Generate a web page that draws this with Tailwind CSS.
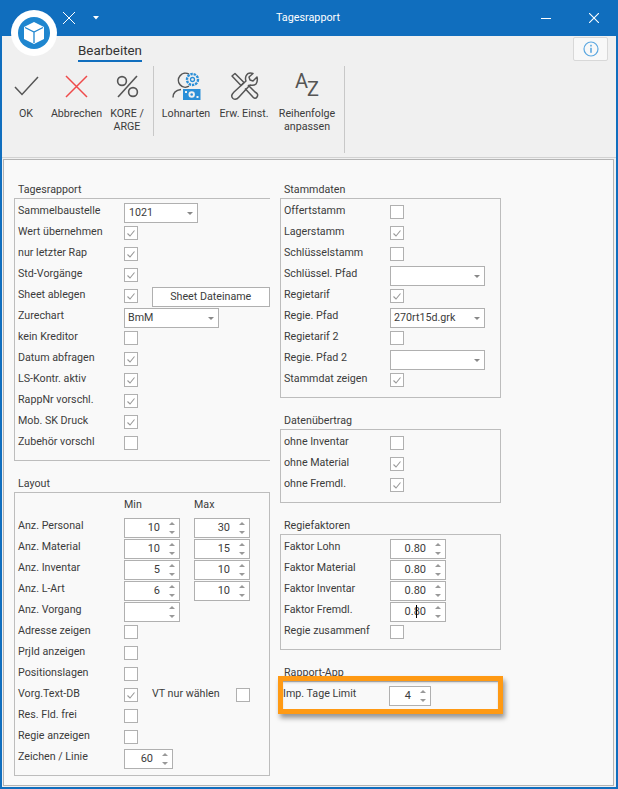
<!DOCTYPE html>
<html lang="de">
<head>
  <meta charset="UTF-8" />
  <title>Tagesrapport</title>
  <script src="https://cdn.jsdelivr.net/npm/@tailwindcss/browser@4"></script>
</head>
<body class="bg-white">
  <div class="relative w-[618px] h-[789px] overflow-hidden flex flex-col bg-[#f0f0f0] border-x-2 border-b-2 border-[#106ebe] font-['Roboto',sans-serif] text-[10.7px] text-[#3c3c3c]">

    <!-- title bar -->
    <div class="relative h-[36px] shrink-0 bg-[#106ebe] -mx-[2px] flex items-center justify-center text-white text-[10.8px]">
      <span class="-ml-[2px]">Tagesrapport</span>
      <svg class="absolute left-[63px] top-[12px]" width="12" height="12" viewBox="0 0 12 12"><path d="M0 0L12 12M12 0L0 12" stroke="#fff" stroke-width="1" fill="none"/></svg>
      <svg class="absolute left-[93px] top-[16px]" width="6" height="4" viewBox="0 0 6 4"><path d="M0 0H6L3 3.5Z" fill="#fff"/></svg>
      <div class="absolute left-[541px] top-[18px] w-[10px] h-px bg-white"></div>
      <svg class="absolute left-[589px] top-[13px]" width="10" height="10" viewBox="0 0 10 10"><path d="M0 0L10 10M10 0L0 10" stroke="#fff" stroke-width="1.1" fill="none"/></svg>
    </div>

    <!-- tab row -->
    <div class="relative h-[30px] shrink-0">
      <div class="absolute left-[76px] top-[5px] text-[13.4px] leading-[19px] text-[#333] border-b-2 border-[#106ebe] h-[21px]">Bearbeiten</div>
      <div class="absolute right-[8px] top-[1px] w-[35px] h-[24px] bg-[#f8f8f8] border border-[#d8d8d8] rounded-[2px] flex items-center justify-center">
        <svg width="16" height="16" viewBox="0 0 16 16"><circle cx="8" cy="8" r="7" fill="none" stroke="#5ba7e0" stroke-width="1.2"/><rect x="7.2" y="6.8" width="1.6" height="5" fill="#5ba7e0"/><rect x="7.2" y="3.8" width="1.6" height="1.7" fill="#5ba7e0"/></svg>
      </div>
    </div>

    <!-- ribbon -->
    <div class="h-[91px] shrink-0 flex pl-[5px]">
      <div class="w-[38px] flex flex-col items-center">
        <div class="h-[40px] flex items-center justify-center">
          <svg width="25" height="20" viewBox="0 0 25 20"><path d="M1 11L8 18.5L24 1" fill="none" stroke="#555" stroke-width="1.5"/></svg>
        </div>
        <div class="mt-[1px] leading-[13px] text-center">OK</div>
      </div>
      <div class="w-[63px] flex flex-col items-center">
        <div class="h-[40px] flex items-center justify-center">
          <svg width="23" height="23" viewBox="0 0 23 23"><path d="M1 1L22 22M22 1L1 22" fill="none" stroke="#ef4a4a" stroke-width="1.5"/></svg>
        </div>
        <div class="mt-[1px] leading-[13px] text-center">Abbrechen</div>
      </div>
      <div class="w-[38px] flex flex-col items-center">
        <div class="h-[40px] flex items-center justify-center">
          <svg width="23" height="23" viewBox="0 0 23 23"><g fill="none" stroke="#555" stroke-width="1.6"><circle cx="6" cy="6" r="4.4"/><circle cx="17" cy="17" r="4.4"/><path d="M21 1L2 22"/></g></svg>
        </div>
        <div class="mt-[1px] leading-[13px] text-center">KORE /<br>ARGE</div>
      </div>
      <div class="w-px h-[70px] ml-[7px] bg-[#c8c8c8]"></div>
      <div class="w-[58px] ml-[3px] flex flex-col items-center">
        <div class="h-[40px] flex items-center justify-center">
          <svg width="29" height="29" viewBox="0 0 29 29">
            <path d="M17 2.200A7 7 0 1 0 17 14.200" fill="none" stroke="#555" stroke-width="1.500"/>
            <path d="M1 25.500Q1 18.500 9 17.500" fill="none" stroke="#555" stroke-width="1.500"/>
            <circle cx="20.500" cy="7.500" r="5.500" fill="#f0f0f0" stroke="#2b8fd8" stroke-width="2.400" stroke-dasharray="2.400 0.900"/>
            <circle cx="20.500" cy="7.500" r="2" fill="none" stroke="#2b8fd8" stroke-width="1.300"/>
            <rect x="11" y="17" width="17.500" height="11" fill="#2b8fd8"/>
            <circle cx="19.700" cy="22.500" r="3.200" fill="#f0f0f0"/>
            <circle cx="19.700" cy="22.500" r="1.300" fill="#2b8fd8"/>
            <rect x="13" y="19" width="2" height="2" fill="#f0f0f0"/><rect x="24.500" y="24" width="2" height="2" fill="#f0f0f0"/>
          </svg>
        </div>
        <div class="mt-[1px] leading-[13px] text-center">Lohnarten</div>
      </div>
      <div class="w-[58px] flex flex-col items-center">
        <div class="h-[40px] flex items-center justify-center">
          <svg width="29" height="29" viewBox="0 0 29 29">
            <g fill="none" stroke="#555" stroke-width="1.5" stroke-linejoin="round">
              <path d="M2 4L5 1.500L14 10.500L11 13.500Z"/>
              <path d="M15 16.500L22 24Q25 28 27 25Q29 22 25 20L18 13"/>
              <path d="M27 5L23 9L20 8L19 5L23 1.500Q18 0 16 4Q15 7 16 9L4 20Q0 24 3 26.500Q6 28.500 9 25L20 13Q24 14 26 12Q28 9 27 5Z"/>
            </g>
          </svg>
        </div>
        <div class="mt-[1px] leading-[13px] text-center">Erw. Einst.</div>
      </div>
      <div class="w-[68px] flex flex-col items-center">
        <div class="h-[40px] flex items-start justify-center text-[#555] text-[20px] leading-[20px]">
          <span class="mt-[5px]">A</span><span class="mt-[13px] -ml-[1px]">Z</span>
        </div>
        <div class="mt-[1px] leading-[13px] text-center">Reihenfolge<br>anpassen</div>
      </div>
      <div class="w-px h-[87px] ml-[3px] bg-[#c8c8c8]"></div>
    </div>

    <!-- main panel -->
    <div class="flex-1 flex flex-col border-t border-[#d2d2d2] pt-[1px]">
    <div class="ml-[1px] mr-[2px] mb-[1px] flex-1 flex gap-[10px] bg-[#f9f9f9] border border-[#b4b4b4] pt-[22px] pl-[10px]">

      <!-- left column -->
      <div class="w-[256px] flex flex-col gap-[15px]">
        <div>
          <div class="h-[16px] leading-[16px] pl-[4px]">Tagesrapport</div>
          <div class="h-[263px] border-t border-l border-b border-[#bdbdbd] pl-[3px] pt-[1px]">
            <div class="flex h-[21px]"><span class="w-[106px] leading-[21px]">Sammelbaustelle</span>
              <div class="relative mt-[3px] w-[74px] h-[20px] bg-white border border-[#b0b0b0] pl-[4px] leading-[18px]">1021<span class="absolute right-[4px] top-[8px] w-0 h-0 border-x-[3px] border-t-[3px] border-x-transparent border-t-[#888]"></span></div>
            </div>
            <div class="flex h-[21px]"><span class="w-[106px] leading-[21px]">Wert übernehmen</span><div class="mt-[5px] w-[14px] h-[14px] bg-white border border-[#b0b0b0] flex items-center justify-center"><svg width="8" height="7" viewBox="0 0 8 7"><path d="M0.500 3.500L3 6L7.500 0.500" fill="none" stroke="#999" stroke-width="1.100"/></svg></div></div>
            <div class="flex h-[21px]"><span class="w-[106px] leading-[21px]">nur letzter Rap</span><div class="mt-[5px] w-[14px] h-[14px] bg-white border border-[#b0b0b0] flex items-center justify-center"><svg width="8" height="7" viewBox="0 0 8 7"><path d="M0.500 3.500L3 6L7.500 0.500" fill="none" stroke="#999" stroke-width="1.100"/></svg></div></div>
            <div class="flex h-[21px]"><span class="w-[106px] leading-[21px]">Std-Vorgänge</span><div class="mt-[5px] w-[14px] h-[14px] bg-white border border-[#b0b0b0] flex items-center justify-center"><svg width="8" height="7" viewBox="0 0 8 7"><path d="M0.500 3.500L3 6L7.500 0.500" fill="none" stroke="#999" stroke-width="1.100"/></svg></div></div>
            <div class="flex h-[21px]"><span class="w-[106px] leading-[21px]">Sheet ablegen</span><div class="mt-[5px] w-[14px] h-[14px] bg-white border border-[#b0b0b0] flex items-center justify-center"><svg width="8" height="7" viewBox="0 0 8 7"><path d="M0.500 3.500L3 6L7.500 0.500" fill="none" stroke="#999" stroke-width="1.100"/></svg></div>
              <div class="ml-[14px] mt-[3px] w-[119px] h-[20px] bg-white border border-[#b0b0b0] text-center leading-[18px]">Sheet Dateiname</div>
            </div>
            <div class="flex h-[21px]"><span class="w-[106px] leading-[21px]">Zurechart</span>
              <div class="relative mt-[3px] w-[95px] h-[20px] bg-white border border-[#b0b0b0] pl-[3px] leading-[18px]">BmM<span class="absolute right-[4px] top-[8px] w-0 h-0 border-x-[3px] border-t-[3px] border-x-transparent border-t-[#888]"></span></div>
            </div>
            <div class="flex h-[21px]"><span class="w-[106px] leading-[21px]">kein Kreditor</span><div class="mt-[5px] w-[14px] h-[14px] bg-white border border-[#b0b0b0]"></div></div>
            <div class="flex h-[21px]"><span class="w-[106px] leading-[21px]">Datum abfragen</span><div class="mt-[5px] w-[14px] h-[14px] bg-white border border-[#b0b0b0] flex items-center justify-center"><svg width="8" height="7" viewBox="0 0 8 7"><path d="M0.500 3.500L3 6L7.500 0.500" fill="none" stroke="#999" stroke-width="1.100"/></svg></div></div>
            <div class="flex h-[21px]"><span class="w-[106px] leading-[21px]">LS-Kontr. aktiv</span><div class="mt-[5px] w-[14px] h-[14px] bg-white border border-[#b0b0b0] flex items-center justify-center"><svg width="8" height="7" viewBox="0 0 8 7"><path d="M0.500 3.500L3 6L7.500 0.500" fill="none" stroke="#999" stroke-width="1.100"/></svg></div></div>
            <div class="flex h-[21px]"><span class="w-[106px] leading-[21px]">RappNr vorschl.</span><div class="mt-[5px] w-[14px] h-[14px] bg-white border border-[#b0b0b0] flex items-center justify-center"><svg width="8" height="7" viewBox="0 0 8 7"><path d="M0.500 3.500L3 6L7.500 0.500" fill="none" stroke="#999" stroke-width="1.100"/></svg></div></div>
            <div class="flex h-[21px]"><span class="w-[106px] leading-[21px]">Mob. SK Druck</span><div class="mt-[5px] w-[14px] h-[14px] bg-white border border-[#b0b0b0] flex items-center justify-center"><svg width="8" height="7" viewBox="0 0 8 7"><path d="M0.500 3.500L3 6L7.500 0.500" fill="none" stroke="#999" stroke-width="1.100"/></svg></div></div>
            <div class="flex h-[21px]"><span class="w-[106px] leading-[21px]">Zubehör vorschl</span><div class="mt-[5px] w-[14px] h-[14px] bg-white border border-[#b0b0b0]"></div></div>
          </div>
        </div>

        <div>
          <div class="h-[16px] leading-[16px] pl-[4px]">Layout</div>
          <div class="h-[284px] border border-[#bdbdbd] pl-[3px]">
            <div class="flex h-[22px] pt-[2px] items-center"><span class="w-[106px]"></span><span class="w-[70px]">Min</span><span>Max</span></div>
            <div>
              <div class="flex h-[21px]"><span class="w-[106px] leading-[21px]">Anz. Personal</span>
                <div class="relative mt-[3px] w-[56px] h-[20px] bg-white border border-[#b0b0b0] pr-[19px] text-right text-[11px] leading-[18px]">10<span class="absolute right-[4px] top-[3px] w-0 h-0 border-x-[3px] border-b-[3px] border-x-transparent border-b-[#999]"></span><span class="absolute right-[4px] bottom-[3px] w-0 h-0 border-x-[3px] border-t-[3px] border-x-transparent border-t-[#999]"></span></div>
                <div class="relative mt-[3px] ml-[14px] w-[56px] h-[20px] bg-white border border-[#b0b0b0] pr-[19px] text-right text-[11px] leading-[18px]">30<span class="absolute right-[4px] top-[3px] w-0 h-0 border-x-[3px] border-b-[3px] border-x-transparent border-b-[#999]"></span><span class="absolute right-[4px] bottom-[3px] w-0 h-0 border-x-[3px] border-t-[3px] border-x-transparent border-t-[#999]"></span></div>
              </div>
              <div class="flex h-[21px]"><span class="w-[106px] leading-[21px]">Anz. Material</span>
                <div class="relative mt-[3px] w-[56px] h-[20px] bg-white border border-[#b0b0b0] pr-[19px] text-right text-[11px] leading-[18px]">10<span class="absolute right-[4px] top-[3px] w-0 h-0 border-x-[3px] border-b-[3px] border-x-transparent border-b-[#999]"></span><span class="absolute right-[4px] bottom-[3px] w-0 h-0 border-x-[3px] border-t-[3px] border-x-transparent border-t-[#999]"></span></div>
                <div class="relative mt-[3px] ml-[14px] w-[56px] h-[20px] bg-white border border-[#b0b0b0] pr-[19px] text-right text-[11px] leading-[18px]">15<span class="absolute right-[4px] top-[3px] w-0 h-0 border-x-[3px] border-b-[3px] border-x-transparent border-b-[#999]"></span><span class="absolute right-[4px] bottom-[3px] w-0 h-0 border-x-[3px] border-t-[3px] border-x-transparent border-t-[#999]"></span></div>
              </div>
              <div class="flex h-[21px]"><span class="w-[106px] leading-[21px]">Anz. Inventar</span>
                <div class="relative mt-[3px] w-[56px] h-[20px] bg-white border border-[#b0b0b0] pr-[19px] text-right text-[11px] leading-[18px]">5<span class="absolute right-[4px] top-[3px] w-0 h-0 border-x-[3px] border-b-[3px] border-x-transparent border-b-[#999]"></span><span class="absolute right-[4px] bottom-[3px] w-0 h-0 border-x-[3px] border-t-[3px] border-x-transparent border-t-[#999]"></span></div>
                <div class="relative mt-[3px] ml-[14px] w-[56px] h-[20px] bg-white border border-[#b0b0b0] pr-[19px] text-right text-[11px] leading-[18px]">10<span class="absolute right-[4px] top-[3px] w-0 h-0 border-x-[3px] border-b-[3px] border-x-transparent border-b-[#999]"></span><span class="absolute right-[4px] bottom-[3px] w-0 h-0 border-x-[3px] border-t-[3px] border-x-transparent border-t-[#999]"></span></div>
              </div>
              <div class="flex h-[21px]"><span class="w-[106px] leading-[21px]">Anz. L-Art</span>
                <div class="relative mt-[3px] w-[56px] h-[20px] bg-white border border-[#b0b0b0] pr-[19px] text-right text-[11px] leading-[18px]">6<span class="absolute right-[4px] top-[3px] w-0 h-0 border-x-[3px] border-b-[3px] border-x-transparent border-b-[#999]"></span><span class="absolute right-[4px] bottom-[3px] w-0 h-0 border-x-[3px] border-t-[3px] border-x-transparent border-t-[#999]"></span></div>
                <div class="relative mt-[3px] ml-[14px] w-[56px] h-[20px] bg-white border border-[#b0b0b0] pr-[19px] text-right text-[11px] leading-[18px]">10<span class="absolute right-[4px] top-[3px] w-0 h-0 border-x-[3px] border-b-[3px] border-x-transparent border-b-[#999]"></span><span class="absolute right-[4px] bottom-[3px] w-0 h-0 border-x-[3px] border-t-[3px] border-x-transparent border-t-[#999]"></span></div>
              </div>
              <div class="flex h-[21px]"><span class="w-[106px] leading-[21px]">Anz. Vorgang</span>
                <div class="relative mt-[3px] w-[56px] h-[20px] bg-white border border-[#b0b0b0]"><span class="absolute right-[4px] top-[3px] w-0 h-0 border-x-[3px] border-b-[3px] border-x-transparent border-b-[#999]"></span><span class="absolute right-[4px] bottom-[3px] w-0 h-0 border-x-[3px] border-t-[3px] border-x-transparent border-t-[#999]"></span></div>
              </div>
              <div class="flex h-[21px]"><span class="w-[106px] leading-[21px]">Adresse zeigen</span><div class="mt-[5px] w-[14px] h-[14px] bg-white border border-[#b0b0b0]"></div></div>
              <div class="flex h-[21px]"><span class="w-[106px] leading-[21px]">PrjId anzeigen</span><div class="mt-[5px] w-[14px] h-[14px] bg-white border border-[#b0b0b0]"></div></div>
              <div class="flex h-[21px]"><span class="w-[106px] leading-[21px]">Positionslagen</span><div class="mt-[5px] w-[14px] h-[14px] bg-white border border-[#b0b0b0]"></div></div>
              <div class="flex h-[21px]"><span class="w-[106px] leading-[21px]">Vorg.Text-DB</span><div class="mt-[5px] w-[14px] h-[14px] bg-white border border-[#b0b0b0] flex items-center justify-center"><svg width="8" height="7" viewBox="0 0 8 7"><path d="M0.500 3.500L3 6L7.500 0.500" fill="none" stroke="#999" stroke-width="1.100"/></svg></div>
                <span class="ml-[14px] w-[84px] leading-[21px]">VT nur wählen</span><div class="mt-[5px] w-[14px] h-[14px] bg-white border border-[#b0b0b0]"></div>
              </div>
              <div class="flex h-[21px]"><span class="w-[106px] leading-[21px]">Res. Fld. frei</span><div class="mt-[5px] w-[14px] h-[14px] bg-white border border-[#b0b0b0]"></div></div>
              <div class="flex h-[21px]"><span class="w-[106px] leading-[21px]">Regie anzeigen</span><div class="mt-[5px] w-[14px] h-[14px] bg-white border border-[#b0b0b0]"></div></div>
              <div class="flex h-[21px]"><span class="w-[106px] leading-[21px]">Zeichen / Linie</span>
                <div class="relative mt-[3px] w-[49px] h-[20px] bg-white border border-[#b0b0b0] pr-[19px] text-right text-[11px] leading-[18px]">60<span class="absolute right-[4px] top-[3px] w-0 h-0 border-x-[3px] border-b-[3px] border-x-transparent border-b-[#999]"></span><span class="absolute right-[4px] bottom-[3px] w-0 h-0 border-x-[3px] border-t-[3px] border-x-transparent border-t-[#999]"></span></div>
              </div>
            </div>
          </div>
        </div>
      </div>

      <!-- right column -->
      <div class="w-[221px] flex flex-col gap-[15px]">
        <div>
          <div class="h-[16px] leading-[16px] pl-[4px]">Stammdaten</div>
          <div class="h-[200px] border border-[#bdbdbd] pl-[3px] pt-[1px]">
            <div class="flex h-[21px]"><span class="w-[106px] leading-[21px]">Offertstamm</span><div class="mt-[5px] w-[14px] h-[14px] bg-white border border-[#b0b0b0]"></div></div>
            <div class="flex h-[21px]"><span class="w-[106px] leading-[21px]">Lagerstamm</span><div class="mt-[5px] w-[14px] h-[14px] bg-white border border-[#b0b0b0] flex items-center justify-center"><svg width="8" height="7" viewBox="0 0 8 7"><path d="M0.500 3.500L3 6L7.500 0.500" fill="none" stroke="#999" stroke-width="1.100"/></svg></div></div>
            <div class="flex h-[21px]"><span class="w-[106px] leading-[21px]">Schlüsselstamm</span><div class="mt-[5px] w-[14px] h-[14px] bg-white border border-[#b0b0b0]"></div></div>
            <div class="flex h-[21px]"><span class="w-[106px] leading-[21px]">Schlüssel. Pfad</span>
              <div class="relative mt-[3px] w-[95px] h-[20px] bg-white border border-[#b0b0b0]"><span class="absolute right-[4px] top-[8px] w-0 h-0 border-x-[3px] border-t-[3px] border-x-transparent border-t-[#888]"></span></div>
            </div>
            <div class="flex h-[21px]"><span class="w-[106px] leading-[21px]">Regietarif</span><div class="mt-[5px] w-[14px] h-[14px] bg-white border border-[#b0b0b0] flex items-center justify-center"><svg width="8" height="7" viewBox="0 0 8 7"><path d="M0.500 3.500L3 6L7.500 0.500" fill="none" stroke="#999" stroke-width="1.100"/></svg></div></div>
            <div class="flex h-[21px]"><span class="w-[106px] leading-[21px]">Regie. Pfad</span>
              <div class="relative mt-[3px] w-[95px] h-[20px] bg-white border border-[#b0b0b0] pl-[3px] leading-[18px]">270rt15d.grk<span class="absolute right-[4px] top-[8px] w-0 h-0 border-x-[3px] border-t-[3px] border-x-transparent border-t-[#888]"></span></div>
            </div>
            <div class="flex h-[21px]"><span class="w-[106px] leading-[21px]">Regietarif 2</span><div class="mt-[5px] w-[14px] h-[14px] bg-white border border-[#b0b0b0]"></div></div>
            <div class="flex h-[21px]"><span class="w-[106px] leading-[21px]">Regie. Pfad 2</span>
              <div class="relative mt-[3px] w-[95px] h-[20px] bg-white border border-[#b0b0b0]"><span class="absolute right-[4px] top-[8px] w-0 h-0 border-x-[3px] border-t-[3px] border-x-transparent border-t-[#888]"></span></div>
            </div>
            <div class="flex h-[21px]"><span class="w-[106px] leading-[21px]">Stammdat zeigen</span><div class="mt-[5px] w-[14px] h-[14px] bg-white border border-[#b0b0b0] flex items-center justify-center"><svg width="8" height="7" viewBox="0 0 8 7"><path d="M0.500 3.500L3 6L7.500 0.500" fill="none" stroke="#999" stroke-width="1.100"/></svg></div></div>
          </div>
        </div>

        <div>
          <div class="h-[16px] leading-[16px] pl-[4px]">Datenübertrag</div>
          <div class="h-[74px] border border-[#bdbdbd] pl-[3px] pt-[1px]">
            <div class="flex h-[21px]"><span class="w-[106px] leading-[21px]">ohne Inventar</span><div class="mt-[5px] w-[14px] h-[14px] bg-white border border-[#b0b0b0]"></div></div>
            <div class="flex h-[21px]"><span class="w-[106px] leading-[21px]">ohne Material</span><div class="mt-[5px] w-[14px] h-[14px] bg-white border border-[#b0b0b0] flex items-center justify-center"><svg width="8" height="7" viewBox="0 0 8 7"><path d="M0.500 3.500L3 6L7.500 0.500" fill="none" stroke="#999" stroke-width="1.100"/></svg></div></div>
            <div class="flex h-[21px]"><span class="w-[106px] leading-[21px]">ohne Fremdl.</span><div class="mt-[5px] w-[14px] h-[14px] bg-white border border-[#b0b0b0] flex items-center justify-center"><svg width="8" height="7" viewBox="0 0 8 7"><path d="M0.500 3.500L3 6L7.500 0.500" fill="none" stroke="#999" stroke-width="1.100"/></svg></div></div>
          </div>
        </div>

        <div>
          <div class="h-[16px] leading-[16px] pl-[4px]">Regiefaktoren</div>
          <div class="h-[116px] border border-[#bdbdbd] pl-[3px] pt-[1px]">
            <div class="flex h-[21px]"><span class="w-[106px] leading-[21px]">Faktor Lohn</span>
              <div class="relative mt-[3px] w-[56px] h-[20px] bg-white border border-[#b0b0b0] pr-[19px] text-right text-[11px] leading-[18px]">0.80<span class="absolute right-[4px] top-[3px] w-0 h-0 border-x-[3px] border-b-[3px] border-x-transparent border-b-[#999]"></span><span class="absolute right-[4px] bottom-[3px] w-0 h-0 border-x-[3px] border-t-[3px] border-x-transparent border-t-[#999]"></span></div>
            </div>
            <div class="flex h-[21px]"><span class="w-[106px] leading-[21px]">Faktor Material</span>
              <div class="relative mt-[3px] w-[56px] h-[20px] bg-white border border-[#b0b0b0] pr-[19px] text-right text-[11px] leading-[18px]">0.80<span class="absolute right-[4px] top-[3px] w-0 h-0 border-x-[3px] border-b-[3px] border-x-transparent border-b-[#999]"></span><span class="absolute right-[4px] bottom-[3px] w-0 h-0 border-x-[3px] border-t-[3px] border-x-transparent border-t-[#999]"></span></div>
            </div>
            <div class="flex h-[21px]"><span class="w-[106px] leading-[21px]">Faktor Inventar</span>
              <div class="relative mt-[3px] w-[56px] h-[20px] bg-white border border-[#b0b0b0] pr-[19px] text-right text-[11px] leading-[18px]">0.80<span class="absolute right-[4px] top-[3px] w-0 h-0 border-x-[3px] border-b-[3px] border-x-transparent border-b-[#999]"></span><span class="absolute right-[4px] bottom-[3px] w-0 h-0 border-x-[3px] border-t-[3px] border-x-transparent border-t-[#999]"></span></div>
            </div>
            <div class="flex h-[21px]"><span class="w-[106px] leading-[21px]">Faktor Fremdl.</span>
              <div class="relative mt-[3px] w-[56px] h-[20px] bg-white border border-[#b0b0b0] pr-[19px] text-right text-[11px] leading-[18px]">0.80<span class="absolute left-[25px] top-[2px] w-px h-[13px] bg-black"></span><span class="absolute right-[4px] top-[3px] w-0 h-0 border-x-[3px] border-b-[3px] border-x-transparent border-b-[#999]"></span><span class="absolute right-[4px] bottom-[3px] w-0 h-0 border-x-[3px] border-t-[3px] border-x-transparent border-t-[#999]"></span></div>
            </div>
            <div class="flex h-[21px]"><span class="w-[106px] leading-[21px]">Regie zusammenf</span><div class="mt-[5px] w-[14px] h-[14px] bg-white border border-[#b0b0b0]"></div></div>
          </div>
        </div>

        <div>
          <div class="h-[16px] leading-[16px] pl-[4px]">Rapport-App</div>
          <div class="h-[28px] border-t border-[#bdbdbd] pl-[3px] pt-[1px]">
            <div class="flex h-[21px]"><span class="w-[106px] leading-[21px]">Imp. Tage Limit</span>
              <div class="relative mt-[3px] w-[42px] h-[20px] bg-white border border-[#b0b0b0] pr-[19px] text-right text-[11px] leading-[18px]">4<span class="absolute right-[4px] top-[3px] w-0 h-0 border-x-[3px] border-b-[3px] border-x-transparent border-b-[#999]"></span><span class="absolute right-[4px] bottom-[3px] w-0 h-0 border-x-[3px] border-t-[3px] border-x-transparent border-t-[#999]"></span></div>
            </div>
          </div>
        </div>
      </div>
    </div>
    </div>

    <!-- app logo over the title bar -->
    <div class="absolute left-[9px] top-[10px] w-[46px] h-[46px] rounded-full bg-white flex items-center justify-center">
      <svg width="32" height="32" viewBox="0 0 32 32">
        <circle cx="16" cy="16" r="16" fill="#1f86cf"/>
        <path d="M16 5L26 10V22L16 27L6 22V10Z" fill="#fff"/>
        <path d="M7 10.500L16 15L25 10.500M16 15V26" fill="none" stroke="#1f86cf" stroke-width="1.300"/>
      </svg>
    </div>

    <!-- orange highlight -->
    <div class="absolute left-[276px] top-[676px] w-[225px] h-[38px] border-[5px] border-[#ff9a14] shadow-[2px_4px_5px_rgba(0,0,0,0.4),inset_0_2px_2px_rgba(0,0,0,0.15)]"></div>
  </div>
</body>
</html>
